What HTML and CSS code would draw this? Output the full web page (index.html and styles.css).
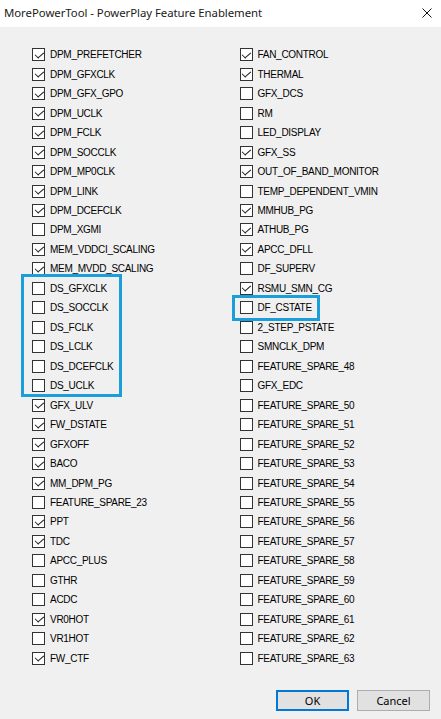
FILE: index.html
```html
<!DOCTYPE html>
<html>
<head>
<meta charset="utf-8">
<link rel="stylesheet" href="styles.css">
</head>
<body>
<div class="window">
  <div class="titlebar">
    <span class="title">MorePowerTool - PowerPlay Feature Enablement</span>
    <svg class="close" width="10" height="10" viewBox="0 0 10 10"><path d="M0.5 0.5 L9.5 9.5 M9.5 0.5 L0.5 9.5" stroke="#111" stroke-width="1" fill="none"/></svg>
  </div>
  <div class="content">
    <div class="columns">
      <div class="col">
        <label class="item"><span class="box on"></span>DPM_PREFETCHER</label>
        <label class="item"><span class="box on"></span>DPM_GFXCLK</label>
        <label class="item"><span class="box on"></span>DPM_GFX_GPO</label>
        <label class="item"><span class="box on"></span>DPM_UCLK</label>
        <label class="item"><span class="box on"></span>DPM_FCLK</label>
        <label class="item"><span class="box on"></span>DPM_SOCCLK</label>
        <label class="item"><span class="box on"></span>DPM_MP0CLK</label>
        <label class="item"><span class="box on"></span>DPM_LINK</label>
        <label class="item"><span class="box on"></span>DPM_DCEFCLK</label>
        <label class="item"><span class="box"></span>DPM_XGMI</label>
        <label class="item"><span class="box on"></span>MEM_VDDCI_SCALING</label>
        <label class="item"><span class="box on"></span>MEM_MVDD_SCALING</label>
        <div class="group group-left">
          <label class="item"><span class="box"></span>DS_GFXCLK</label>
          <label class="item"><span class="box"></span>DS_SOCCLK</label>
          <label class="item"><span class="box"></span>DS_FCLK</label>
          <label class="item"><span class="box"></span>DS_LCLK</label>
          <label class="item"><span class="box"></span>DS_DCEFCLK</label>
          <label class="item"><span class="box"></span>DS_UCLK</label>
        </div>
        <label class="item"><span class="box on"></span>GFX_ULV</label>
        <label class="item"><span class="box on"></span>FW_DSTATE</label>
        <label class="item"><span class="box on"></span>GFXOFF</label>
        <label class="item"><span class="box on"></span>BACO</label>
        <label class="item"><span class="box on"></span>MM_DPM_PG</label>
        <label class="item"><span class="box"></span>FEATURE_SPARE_23</label>
        <label class="item"><span class="box on"></span>PPT</label>
        <label class="item"><span class="box on"></span>TDC</label>
        <label class="item"><span class="box"></span>APCC_PLUS</label>
        <label class="item"><span class="box"></span>GTHR</label>
        <label class="item"><span class="box"></span>ACDC</label>
        <label class="item"><span class="box on"></span>VR0HOT</label>
        <label class="item"><span class="box"></span>VR1HOT</label>
        <label class="item"><span class="box on"></span>FW_CTF</label>
      </div>
      <div class="col">
        <label class="item"><span class="box on"></span>FAN_CONTROL</label>
        <label class="item"><span class="box on"></span>THERMAL</label>
        <label class="item"><span class="box"></span>GFX_DCS</label>
        <label class="item"><span class="box"></span>RM</label>
        <label class="item"><span class="box"></span>LED_DISPLAY</label>
        <label class="item"><span class="box on"></span>GFX_SS</label>
        <label class="item"><span class="box on"></span>OUT_OF_BAND_MONITOR</label>
        <label class="item"><span class="box"></span>TEMP_DEPENDENT_VMIN</label>
        <label class="item"><span class="box on"></span>MMHUB_PG</label>
        <label class="item"><span class="box on"></span>ATHUB_PG</label>
        <label class="item"><span class="box on"></span>APCC_DFLL</label>
        <label class="item"><span class="box"></span>DF_SUPERV</label>
        <label class="item"><span class="box on"></span>RSMU_SMN_CG</label>
        <div class="group group-right">
          <label class="item"><span class="box"></span>DF_CSTATE</label>
        </div>
        <label class="item"><span class="box"></span>2_STEP_PSTATE</label>
        <label class="item"><span class="box"></span>SMNCLK_DPM</label>
        <label class="item"><span class="box"></span>FEATURE_SPARE_48</label>
        <label class="item"><span class="box"></span>GFX_EDC</label>
        <label class="item"><span class="box"></span>FEATURE_SPARE_50</label>
        <label class="item"><span class="box"></span>FEATURE_SPARE_51</label>
        <label class="item"><span class="box"></span>FEATURE_SPARE_52</label>
        <label class="item"><span class="box"></span>FEATURE_SPARE_53</label>
        <label class="item"><span class="box"></span>FEATURE_SPARE_54</label>
        <label class="item"><span class="box"></span>FEATURE_SPARE_55</label>
        <label class="item"><span class="box"></span>FEATURE_SPARE_56</label>
        <label class="item"><span class="box"></span>FEATURE_SPARE_57</label>
        <label class="item"><span class="box"></span>FEATURE_SPARE_58</label>
        <label class="item"><span class="box"></span>FEATURE_SPARE_59</label>
        <label class="item"><span class="box"></span>FEATURE_SPARE_60</label>
        <label class="item"><span class="box"></span>FEATURE_SPARE_61</label>
        <label class="item"><span class="box"></span>FEATURE_SPARE_62</label>
        <label class="item"><span class="box"></span>FEATURE_SPARE_63</label>
      </div>
    </div>
    <div class="buttons">
      <button class="btn btn-ok">OK</button>
      <button class="btn">Cancel</button>
    </div>
  </div>
</div>
</body>
</html>
```
FILE: styles.css
```css
html, body {
  margin: 0;
  padding: 0;
}
body {
  width: 441px;
  height: 719px;
  background: #f0f0f0;
  overflow: hidden;
}
.window {
  display: flex;
  flex-direction: column;
  height: 719px;
}
.titlebar {
  height: 27px;
  background: #ffffff;
  display: flex;
  align-items: center;
  justify-content: space-between;
  padding: 0 9px 3px 4px;
  box-sizing: border-box;
}
.title {
  font-family: "Noto Sans", "Open Sans", sans-serif;
  font-size: 11.4px;
  color: #1a1a1a;
  letter-spacing: -0.05px;
}
.close {
  display: block;
  margin-top: 2px;
}
.content {
  flex: 1;
  background: #f0f0f0;
  padding: 18px 0 0 32px;
  display: flex;
  flex-direction: column;
}
.columns {
  display: grid;
  grid-template-columns: 207.5px 1fr;
}
.col {
  display: flex;
  flex-direction: column;
}
.item {
  height: 19.47px;
  display: flex;
  align-items: center;
  gap: 5px;
  font-family: "Liberation Sans", Arial, sans-serif;
  font-size: 10px;
  letter-spacing: -0.28px;
  color: #000;
  white-space: nowrap;
}
.box {
  width: 13px;
  height: 13px;
  box-sizing: border-box;
  border: 1px solid #333333;
  background: #ffffff;
  flex: none;
  position: relative;
}
.box.on::after {
  content: "";
  position: absolute;
  left: 3.5px;
  top: 0.5px;
  width: 3.5px;
  height: 7px;
  border-right: 1.1px solid #222;
  border-bottom: 1.1px solid #222;
  transform: rotate(45deg) skewX(-4deg);
}
.group {
  position: relative;
}
.group::after {
  content: "";
  position: absolute;
  box-sizing: border-box;
  border: 3px solid #1b9fdb;
  pointer-events: none;
}
.group-left::after {
  left: -11px;
  top: -4.5px;
  width: 101px;
  height: 123px;
}
.group-right::after {
  left: -7.5px;
  top: -3.5px;
  width: 88px;
  height: 26px;
}
.buttons {
  display: flex;
  justify-content: flex-end;
  gap: 8px;
  margin-top: 22px;
  padding-right: 11px;
}
.btn {
  width: 73px;
  height: 21px;
  box-sizing: border-box;
  background: #e1e1e1;
  border: 1px solid #adadad;
  font-family: "Noto Sans", "Open Sans", sans-serif;
  font-size: 11px;
  color: #000;
  padding: 0;
  margin: 0;
  line-height: 1;
}
.btn-ok {
  border: 2px solid #0078d7;
}
```
